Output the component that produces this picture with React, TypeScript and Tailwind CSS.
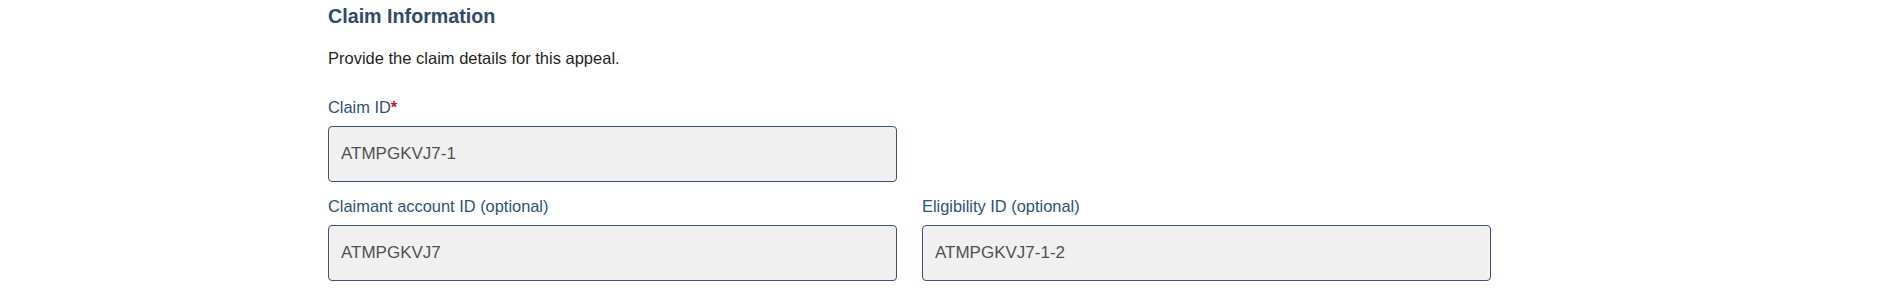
import React from "react";

function Field({
  label,
  value,
  required,
}: {
  label: string;
  value: string;
  required?: boolean;
}) {
  return (
    <div className="flex flex-col">
      <label className="text-[16.4px] leading-[24px] text-[#2b5278]">
        {label}
        {required && <span className="font-bold text-[#c8102e]">*</span>}
      </label>
      <input
        readOnly
        defaultValue={value}
        className="mt-[7px] h-[56px] w-full rounded-[4px] border border-[#3d5470] bg-[#f0f0f0] px-[12px] text-[17px] text-[#505050] outline-none"
      />
    </div>
  );
}

export default function App() {
  return (
    <div
      className="min-h-[303px] w-full bg-white pl-[328px] pt-[4px]"
      style={{ fontFamily: '"Liberation Sans", Arial, sans-serif' }}
    >
      <h2 className="text-[19.7px] font-bold leading-[24px] text-[#2f4a6a]">
        Claim Information
      </h2>
      <p className="mt-[18px] text-[16.5px] leading-[24px] text-[#1f1f1f]">
        Provide the claim details for this appeal.
      </p>
      <div className="mt-[25px] grid w-[1163px] grid-cols-[569px_569px] gap-x-[25px]">
        <Field label="Claim ID" value="ATMPGKVJ7-1" required />
        <div />
      </div>
      <div className="mt-[12px] grid w-[1163px] grid-cols-[569px_569px] gap-x-[25px]">
        <Field label="Claimant account ID (optional)" value="ATMPGKVJ7" />
        <Field label="Eligibility ID (optional)" value="ATMPGKVJ7-1-2" />
      </div>
    </div>
  );
}
